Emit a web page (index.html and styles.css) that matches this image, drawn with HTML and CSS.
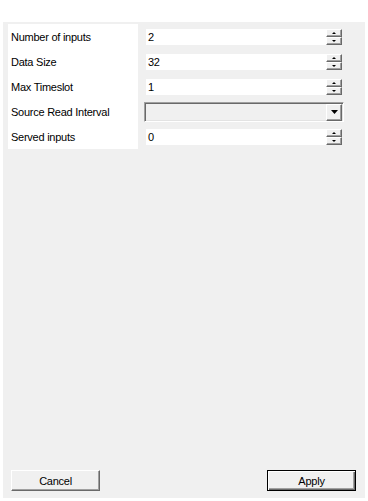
FILE: index.html
```html
<!doctype html>
<html lang="en">
<head>
    <meta charset="UTF-8">
    <title>Properties</title>
    <link rel="stylesheet" href="styles.css">
</head>
<body>
<div class="dialog">
    <div class="props">
        <div class="label">Number of inputs</div>
        <div class="cell">
            <div class="spin-field">
                <span class="value">2</span>
                <span class="spin"><span class="spin-btn up"><i></i></span><span class="spin-btn down"><i></i></span></span>
            </div>
        </div>

        <div class="label">Data Size</div>
        <div class="cell">
            <div class="spin-field">
                <span class="value">32</span>
                <span class="spin"><span class="spin-btn up"><i></i></span><span class="spin-btn down"><i></i></span></span>
            </div>
        </div>

        <div class="label">Max Timeslot</div>
        <div class="cell">
            <div class="spin-field">
                <span class="value">1</span>
                <span class="spin"><span class="spin-btn up"><i></i></span><span class="spin-btn down"><i></i></span></span>
            </div>
        </div>

        <div class="label">Source Read Interval</div>
        <div class="cell">
            <div class="combo">
                <span class="combo-btn">
                    <svg width="7" height="4" viewBox="0 0 7 4"><polygon points="0,0 7,0 3.5,4" fill="#000"/></svg>
                </span>
            </div>
        </div>

        <div class="label">Served inputs</div>
        <div class="cell">
            <div class="spin-field">
                <span class="value">0</span>
                <span class="spin"><span class="spin-btn up"><i></i></span><span class="spin-btn down"><i></i></span></span>
            </div>
        </div>
    </div>

    <div class="actions">
        <button class="btn">Cancel</button>
        <button class="btn default">Apply</button>
    </div>
</div>
</body>
</html>
```

FILE: styles.css
```css
*{margin: 0;padding: 0}
body{
    background: #fff;
    font-family: "Liberation Sans", Arial, sans-serif;
    font-size: 11px;
    letter-spacing: -0.25px;
    color: #000;
}
.dialog {
    margin: 22px 0 0 3px;
    width: 362px;
    height: 476px;
    box-sizing: border-box;
    padding: 2px 9px 7px 5px;
    background: #f0f0f0;
    display: flex;
    flex-direction: column;
    justify-content: space-between;
}
.props{
    display: grid;
    grid-template-columns: 130px 200px;
    grid-auto-rows: 25px;
    column-gap: 6px;
}
.label{
    background: #fff;
    padding-left: 3px;
    display: flex;
    align-items: center;
}
.cell{display: flex;align-items: center;}

/* numeric up-down */
.spin-field{
    margin-left: 2px;
    width: 196px;
    height: 16px;
    background: #fff;
    display: flex;
    align-items: center;
    justify-content: space-between;
}
.value{padding-left: 2px;}
.spin{display: flex;flex-direction: column;width: 16px;height: 16px;}
.spin-btn{
    height: 8px;
    box-sizing: border-box;
    background: #f0f0f0;
    border: 1px solid;
    border-color: #fff #696969 #696969 #fff;
    box-shadow: inset -1px -1px #a0a0a0;
    display: flex;
    align-items: center;
    justify-content: center;
}
.spin-btn i{width: 0;height: 0;border-left: 2px solid transparent;border-right: 2px solid transparent;}
.spin-btn.up i{border-bottom: 2px solid #000;}
.spin-btn.down i{border-top: 2px solid #000;}

/* dropdown */
.combo{
    width: 200px;
    height: 20px;
    box-sizing: border-box;
    border: 1px solid;
    border-color: #a0a0a0 #fff #fff #a0a0a0;
    box-shadow: inset 1px 1px #696969, inset -1px -1px #e3e3e3;
    background: #f0f0f0;
    display: flex;
    justify-content: flex-end;
    align-items: center;
    padding: 1px 1px 0 0;
}
.combo-btn{
    width: 16px;
    height: 17px;
    box-sizing: border-box;
    background: #f0f0f0;
    border: 1px solid;
    border-color: #fff #696969 #696969 #fff;
    box-shadow: inset -1px -1px #a0a0a0;
    display: flex;
    align-items: center;
    justify-content: center;
}
.combo-btn svg{display: block;}

/* buttons */
.actions{display: flex;justify-content: space-between;padding-left: 3px;}
.btn{
    width: 89px;
    height: 21px;
    font: inherit;
    letter-spacing: inherit;
    color: #000;
    background: #f0f0f0;
    border: 1px solid;
    border-color: #fff #696969 #696969 #fff;
    box-shadow: inset -1px -1px #a0a0a0;
}
.btn.default{
    border: 1px solid #000;
    box-shadow: inset 1px 1px #fff, inset -1px -1px #696969, inset -2px -2px #a0a0a0;
}
```
